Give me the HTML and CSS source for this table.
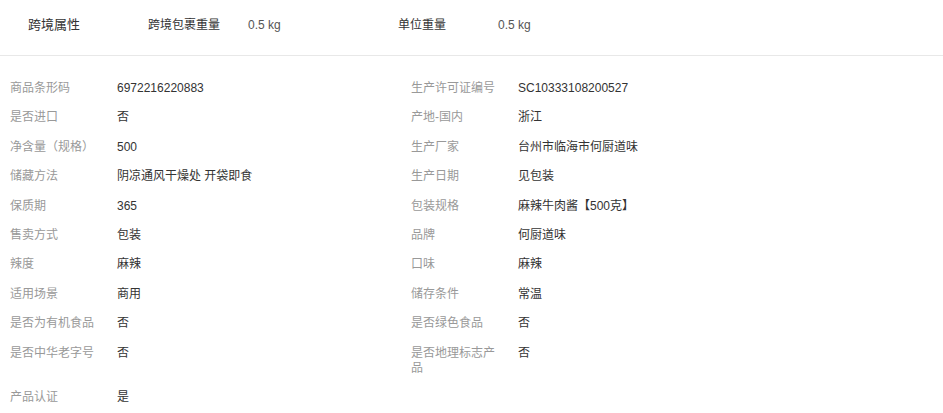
FILE: index.html
```html
<!DOCTYPE html>
<html lang="zh-CN">
<head>
  <meta charset="UTF-8" />
  <title>商品属性</title>
  <link rel="stylesheet" href="styles.css">
</head>
<body>
  <div class="cross">
    <div class="cross-title">跨境属性</div>
    <div class="cross-item">
      <span class="cross-label">跨境包裹重量</span>
      <span class="cross-value">0.5 kg</span>
    </div>
    <div class="cross-item">
      <span class="cross-label">单位重量</span>
      <span class="cross-value">0.5 kg</span>
    </div>
  </div>

  <div class="attrs">
    <div class="attr"><div class="label">商品条形码</div><div class="value">6972216220883</div></div>
    <div class="attr"><div class="label">生产许可证编号</div><div class="value">SC10333108200527</div></div>
    <div class="attr"><div class="label">是否进口</div><div class="value">否</div></div>
    <div class="attr"><div class="label">产地-国内</div><div class="value">浙江</div></div>
    <div class="attr"><div class="label">净含量（规格）</div><div class="value">500</div></div>
    <div class="attr"><div class="label">生产厂家</div><div class="value">台州市临海市何厨道味</div></div>
    <div class="attr"><div class="label">储藏方法</div><div class="value">阴凉通风干燥处 开袋即食</div></div>
    <div class="attr"><div class="label">生产日期</div><div class="value">见包装</div></div>
    <div class="attr"><div class="label">保质期</div><div class="value">365</div></div>
    <div class="attr"><div class="label">包装规格</div><div class="value">麻辣牛肉酱【500克】</div></div>
    <div class="attr"><div class="label">售卖方式</div><div class="value">包装</div></div>
    <div class="attr"><div class="label">品牌</div><div class="value">何厨道味</div></div>
    <div class="attr"><div class="label">辣度</div><div class="value">麻辣</div></div>
    <div class="attr"><div class="label">口味</div><div class="value">麻辣</div></div>
    <div class="attr"><div class="label">适用场景</div><div class="value">商用</div></div>
    <div class="attr"><div class="label">储存条件</div><div class="value">常温</div></div>
    <div class="attr"><div class="label">是否为有机食品</div><div class="value">否</div></div>
    <div class="attr"><div class="label">是否绿色食品</div><div class="value">否</div></div>
    <div class="attr"><div class="label">是否中华老字号</div><div class="value">否</div></div>
    <div class="attr"><div class="label">是否地理标志产品</div><div class="value">否</div></div>
    <div class="attr"><div class="label">产品认证</div><div class="value">是</div></div>
  </div>
</body>
</html>
```

FILE: styles.css
```css
body {
  margin: 0;
  background: #fff;
  font-family: "Liberation Sans", "Noto Sans CJK SC", sans-serif;
  font-size: 12px;
  color: #333;
}
.cross {
  display: flex;
  align-items: baseline;
  height: 56px;
  padding: 15px 0 0 28px;
  border-bottom: 1px solid #e8e8e8;
  box-sizing: border-box;
  line-height: 20px;
}
.cross-title {
  width: 120px;
  font-size: 13px;
  color: #333;
}
.cross-item {
  display: flex;
  align-items: baseline;
  width: 250px;
}
.cross-label {
  width: 100px;
  color: #333;
}
.cross-value {
  color: #555;
}
.attrs {
  display: grid;
  grid-template-columns: 401px 1fr;
  padding: 18px 0 0 10px;
}
.attr {
  display: flex;
  align-items: flex-start;
  padding: 7px 0;
  line-height: 15.4px;
}
.label {
  width: 94px;
  padding-right: 13px;
  color: #999;
  flex-shrink: 0;
}
.value {
  color: #333;
}
```
